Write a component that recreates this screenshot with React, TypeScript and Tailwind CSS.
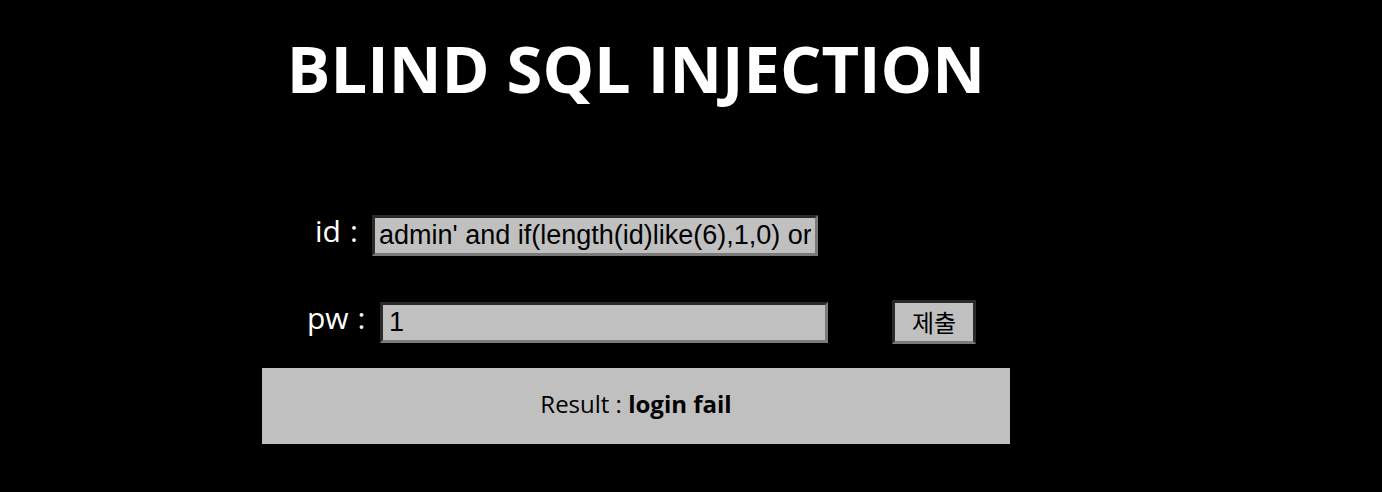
export default function App() {
  return (
    <div className="min-h-[492px] w-full bg-black font-['Open_Sans','Noto_Sans_CJK_KR',sans-serif]">
      <div className="ml-[262px] w-[748px] pt-[23px]">
        <h1 className="text-center text-[65px] font-bold leading-[90px] text-white">
          BLIND SQL INJECTION
        </h1>

        <div className="mt-[102px] flex items-baseline pl-[53px]">
          <label className="relative -top-[2px] flex w-[57px] gap-[9px] text-[30px] leading-none text-white">
            <span>id</span>
            <span>:</span>
          </label>
          <input
            readOnly
            value="admin' and if(length(id)like(6),1,0) or"
            className="h-[41px] w-[446px] border-[3px] border-t-[#2a2a2a] border-l-[#2a2a2a] border-b-[#7a7a7a] border-r-[#7a7a7a] bg-[#c0c0c0] px-[4px] font-['Liberation_Sans',sans-serif] text-[27px] text-black outline-none"
          />
        </div>

        <div className="mt-[46px] flex items-start pl-[45px]">
          <div className="flex items-baseline">
            <label className="relative -top-[2px] flex w-[73px] gap-[9px] text-[30px] leading-none text-white">
              <span>pw</span>
              <span>:</span>
            </label>
            <input
              readOnly
              value="1"
              className="h-[41px] w-[448px] border-[3px] border-t-[#2a2a2a] border-l-[#2a2a2a] border-b-[#7a7a7a] border-r-[#7a7a7a] bg-[#c0c0c0] px-[6px] font-['Liberation_Sans',sans-serif] text-[27px] text-black outline-none"
            />
          </div>
          <button className="-mt-[2px] ml-[64px] h-[44px] w-[84px] border-[3px] border-t-[#2a2a2a] border-l-[#2a2a2a] border-b-[#7a7a7a] border-r-[#2a2a2a] bg-[#c0c0c0] font-['Noto_Sans_CJK_KR',sans-serif] text-[24px] leading-none text-black">
            제출
          </button>
        </div>

        <div className="mt-[24px] flex h-[76px] items-center justify-center bg-[#c0c0c0] pb-[4px] text-[24px] text-black">
          <span>
            Result : <b className="font-bold">login fail</b>
          </span>
        </div>
      </div>
    </div>
  );
}
